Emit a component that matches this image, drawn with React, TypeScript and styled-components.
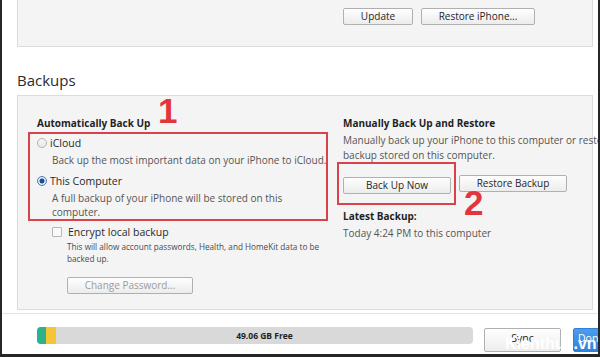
import React from "react";
import styled, { createGlobalStyle } from "styled-components";

const Global = createGlobalStyle`
  html, body { margin: 0; padding: 0; background: #fff; }
  body { font-family: "Open Sans", "Noto Sans", sans-serif; color: #333; }
  * { box-sizing: border-box; }
`;

const Frame = styled.div`
  position: relative;
  width: 600px;
  height: 357px;
  border-left: 2px solid #262626;
  border-right: 2px solid #262626;
  border-bottom: 3px solid #262626;
  background: #fff;
  overflow: hidden;
  display: flex;
  flex-direction: column;
`;

const TopPanel = styled.div`
  margin-left: 15px;
  width: 576px;
  height: 47px;
  flex: none;
  background: #f4f4f4;
  border: 1px solid #dcdcdc;
  border-top: none;
  display: flex;
  gap: 8px;
  padding: 8px 0 0 325px;
`;

const Button = styled.button<{ $w: number; $disabled?: boolean }>`
  width: ${(p) => p.$w}px;
  height: 17px;
  padding: 0;
  flex: none;
  border: 1px solid #b0b0b0;
  border-radius: 2px;
  background: linear-gradient(#fefefe, #ececec);
  font-family: "Open Sans", "Noto Sans", sans-serif;
  font-size: 10px;
  line-height: 15px;
  color: ${(p) => (p.$disabled ? "#9c9c9c" : "#262626")};
  text-align: center;
`;

const Heading = styled.h2`
  margin: 23px 0 5px 15px;
  font-size: 15px;
  line-height: 20px;
  font-weight: 400;
  color: #2b2b2b;
`;

const Panel = styled.div`
  margin-left: 15px;
  width: 576px;
  height: 215px;
  flex: none;
  background: #f4f4f4;
  border: 1px solid #dcdcdc;
  display: grid;
  grid-template-columns: 319px 1fr;
  padding-top: 20px;
`;

const Column = styled.div<{ $pad: number }>`
  padding-left: ${(p) => p.$pad}px;
  display: flex;
  flex-direction: column;
  align-items: flex-start;
  min-width: 0;
`;

const ColTitle = styled.div`
  font-size: 10px;
  line-height: 14px;
  font-weight: 700;
  color: #1f1f1f;
  white-space: nowrap;
`;

const RadioBox = styled.div`
  margin: 2px 0 0 -9px;
  width: 300px;
  border: 2px solid #d8434b;
  padding: 2px 0 0 7px;
`;

const OptionRow = styled.div<{ $gap: number }>`
  display: flex;
  align-items: center;
  gap: 3px;
  margin-top: ${(p) => p.$gap}px;
  font-size: 10.5px;
  line-height: 14px;
  color: #2a2a2a;
`;

const Radio = styled.span<{ $on?: boolean }>`
  width: 10px;
  height: 10px;
  flex: none;
  border-radius: 50%;
  border: 1px solid ${(p) => (p.$on ? "#4a7bb7" : "#b3b3b3")};
  background: ${(p) =>
    p.$on
      ? "radial-gradient(circle, #1d4f8f 0 2.2px, #dfe9f5 2.8px)"
      : "linear-gradient(#f6f6f6, #e8e8e8)"};
`;

const Desc = styled.div<{ $gap?: number }>`
  margin-top: ${(p) => p.$gap ?? 3}px;
  padding-left: 15px;
  font-size: 10px;
  line-height: 14px;
  color: #555;
  white-space: nowrap;
`;

const CheckRow = styled.div`
  display: flex;
  align-items: center;
  gap: 6px;
  margin-top: 4px;
  padding-left: 15px;
  font-size: 10.5px;
  line-height: 14px;
  color: #2a2a2a;
`;

const CheckBox = styled.span`
  width: 10px;
  height: 10px;
  flex: none;
  border: 1px solid #b8b8b8;
  border-radius: 1px;
  background: #f9f9f9;
`;

const Small = styled.div`
  margin-top: 2px;
  padding-left: 30px;
  font-size: 8.2px;
  line-height: 12px;
  color: #4a4a4a;
  white-space: nowrap;
`;

const Indented = styled.div`
  margin-top: 7px;
  padding-left: 30px;
`;

const RightDesc = styled.div`
  margin-top: 3px;
  font-size: 10px;
  line-height: 15px;
  color: #555;
  white-space: nowrap;
`;

const ActionRow = styled.div`
  margin: -1px 0 0 -6px;
  display: flex;
  align-items: center;
  gap: 3px;
`;

const HighlightBox = styled.div`
  border: 2px solid #d8434b;
  padding: 8px 3px 9px 4px;
`;

const SubTitle = styled(ColTitle)`
  margin-top: 4px;
`;

const PlainLine = styled.div`
  margin-top: 3px;
  font-size: 10px;
  line-height: 14px;
  color: #555;
`;

const Footer = styled.div`
  margin-top: 3px;
  flex: 1;
  border-top: 1px solid #e3e3e3;
  display: flex;
  align-items: flex-start;
  padding: 13px 0 0 35px;
`;

const StorageBar = styled.div`
  width: 436px;
  height: 17px;
  flex: none;
  border-radius: 4px;
  overflow: hidden;
  display: flex;
  background: #d9d9d9;
`;

const Segment = styled.div<{ $w: number; $c: string }>`
  width: ${(p) => p.$w}px;
  background: ${(p) => p.$c};
`;

const FreeLabel = styled.div`
  flex: 1;
  text-align: center;
  font-size: 8.5px;
  line-height: 17px;
  font-weight: 700;
  color: #222;
`;

const FooterButton = styled.button<{ $primary?: boolean; $w: number; $ml: number }>`
  width: ${(p) => p.$w}px;
  height: 24px;
  margin: 1px 0 0 ${(p) => p.$ml}px;
  flex: none;
  padding: 0 0 5px;
  border: 1px solid ${(p) => (p.$primary ? "#2f7fd6" : "#b0b0b0")};
  border-radius: 2px;
  background: ${(p) => (p.$primary ? "linear-gradient(#4d9cec, #2f84dc)" : "linear-gradient(#fefefe, #ededed)")};
  color: ${(p) => (p.$primary ? "#fff" : "#222")};
  font-family: "Open Sans", "Noto Sans", sans-serif;
  font-size: 10.5px;
  text-align: ${(p) => (p.$primary ? "left" : "center")};
  padding-left: ${(p) => (p.$primary ? "4px" : "0")};
`;

const Marker = styled.div<{ $x: number; $y: number }>`
  position: absolute;
  left: ${(p) => p.$x}px;
  top: ${(p) => p.$y}px;
  font-family: "Liberation Sans", Arial, sans-serif;
  font-weight: 700;
  font-size: 35px;
  line-height: 1;
  color: #e3353b;
`;

const Watermark = styled.div`
  position: absolute;
  left: 503px;
  top: 335px;
  font-family: "Liberation Sans", Arial, sans-serif;
  font-weight: 700;
  font-size: 16px;
  color: #fff;
  white-space: nowrap;
`;

export default function App() {
  return (
    <Frame>
      <Global />
      <TopPanel>
        <Button $w={70}>Update</Button>
        <Button $w={114}>Restore iPhone...</Button>
      </TopPanel>

      <Heading>Backups</Heading>

      <Panel>
        <Column $pad={19}>
          <ColTitle>Automatically Back Up</ColTitle>
          <RadioBox>
            <OptionRow $gap={0}>
              <Radio />
              iCloud
            </OptionRow>
            <Desc>Back up the most important data on your iPhone to iCloud.</Desc>
            <OptionRow $gap={7}>
              <Radio $on />
              This Computer
            </OptionRow>
            <Desc>
              A full backup of your iPhone will be stored on this
              <br />
              computer.
            </Desc>
          </RadioBox>
          <CheckRow>
            <CheckBox />
            Encrypt local backup
          </CheckRow>
          <Small>
            This will allow account passwords, Health, and HomeKit data to be
            <br />
            backed up.
          </Small>
          <Indented>
            <Button $w={126} $disabled>
              Change Password...
            </Button>
          </Indented>
        </Column>

        <Column $pad={6}>
          <ColTitle>Manually Back Up and Restore</ColTitle>
          <RightDesc>
            Manually back up your iPhone to this computer or restore a
            <br />
            backup stored on this computer.
          </RightDesc>
          <ActionRow>
            <HighlightBox>
              <Button $w={108}>Back Up Now</Button>
            </HighlightBox>
            <Button $w={108}>Restore Backup</Button>
          </ActionRow>
          <SubTitle>Latest Backup:</SubTitle>
          <PlainLine>Today 4:24 PM to this computer</PlainLine>
        </Column>
      </Panel>

      <Footer>
        <StorageBar>
          <Segment $w={9} $c="#2db38c" />
          <Segment $w={10} $c="#f5c633" />
          <FreeLabel>49.06 GB Free</FreeLabel>
        </StorageBar>
        <FooterButton $w={77} $ml={11}>Sync</FooterButton>
        <FooterButton $primary $w={60} $ml={12}>Done</FooterButton>
      </Footer>

      <Marker $x={156} $y={93}>1</Marker>
      <Marker $x={462} $y={185}>2</Marker>
      <Watermark>Kienthuc.vn</Watermark>
    </Frame>
  );
}
